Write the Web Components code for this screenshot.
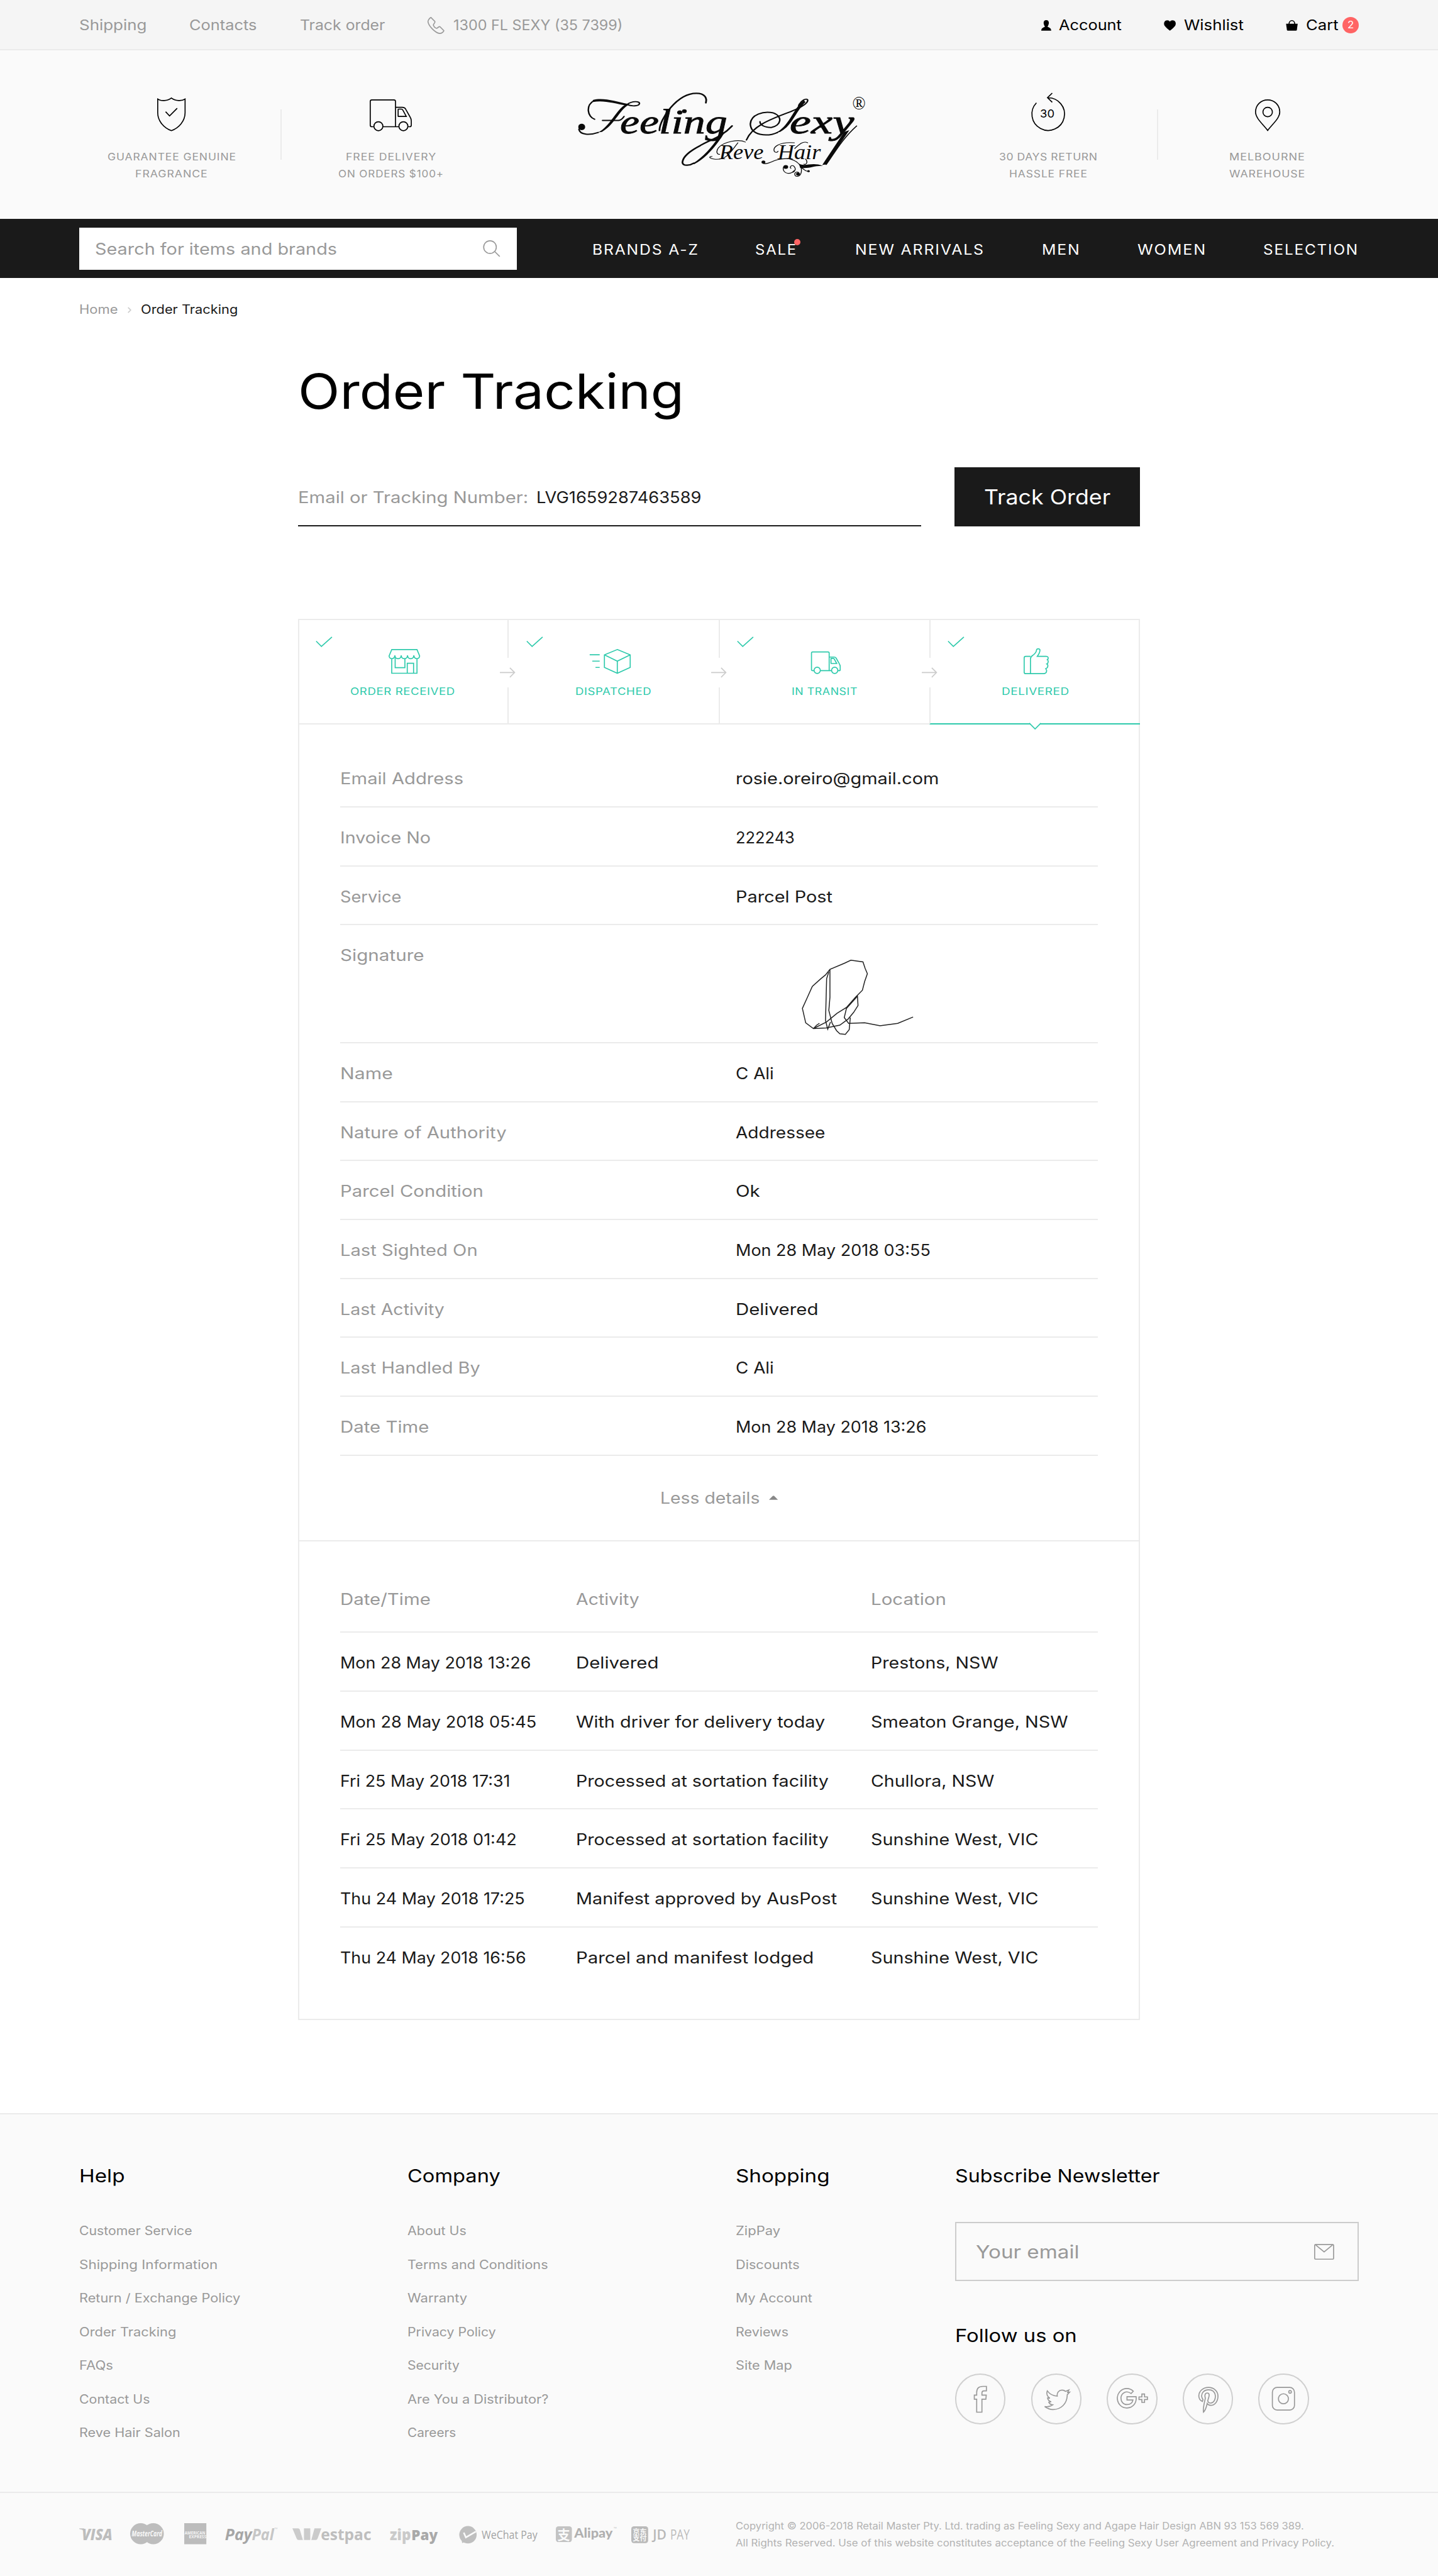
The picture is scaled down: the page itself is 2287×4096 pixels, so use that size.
<!DOCTYPE html>
<html lang="en">
<head>
<meta charset="utf-8">
<title>Order Tracking</title>
<style>
html{background:#fff}
body{margin:0;height:4096px;font-family:Inter,"Open Sans",sans-serif;font-weight:420;color:#1a1a1a;overflow:hidden;display:flex;flex-direction:column}
</style>
</head>
<body>
<top-bar></top-bar>
<brand-header></brand-header>
<main-nav></main-nav>
<crumb-trail></crumb-trail>
<tracking-page>
  <fit-text slot="title" w="722" fs="96" color="#000" wt="440">Order Tracking</fit-text>
  <status-card></status-card>
</tracking-page>
<site-footer></site-footer>
<pay-footer></pay-footer>
<script>
/* Lengths are written in design units; S turns them into CSS pixels */
const S = .837;
const px = s => s.replace(/(-?[\d.]+)px/g, (_, v) => (v * S).toFixed(3) + 'px')
  .replace(/(<svg[^>]*?) width="([\d.]+)" height="([\d.]+)"/g, (_, a, w, h) => `${a} width="${(w * S).toFixed(3)}" height="${(h * S).toFixed(3)}"`);
const define = (name, css, html, after) => customElements.define(name, class extends HTMLElement {
  connectedCallback() {
    if (this.shadowRoot) return;
    const root = this.attachShadow({ mode: 'open' });
    root.innerHTML = px(`<style>*{box-sizing:border-box}:host{display:block;box-sizing:border-box;flex:none}${css}</style>` +
      (typeof html === 'function' ? html(this) : html));
    if (after) after(this, root);
  }
});

/* Text set to a given ink width: w = width, fs = size, ls = tracking, wt = weight */
const ctx = document.createElement('canvas').getContext('2d');
const T = (t, w, fs, color = '#1a1a1a', ls = 0, wt = 420) =>
  `<fit-text w="${w}" fs="${fs}" color="${color}" ls="${ls}" wt="${wt}">${t}</fit-text>`;
define('fit-text', `:host{display:inline-block;flex:none;white-space:nowrap;text-align:left}
  span{display:inline-block;transform-origin:0 50%}`, '<span><slot></slot></span>', (el, root) => {
  const a = n => el.getAttribute(n);
  const size = a('fs') * .965 * S, ls = (a('ls') || 0) * S, wt = a('wt') || 420;
  ctx.font = `${wt} ${size}px Inter, "Open Sans", sans-serif`;
  const text = el.textContent, m = ctx.measureText(text), n = [...text].length;
  const ink = m.actualBoundingBoxRight + m.actualBoundingBoxLeft + ls * (n - 1);
  const k = (a('w') - (a('w') > 40 ? 1.2 : 0)) * S / ink;
  el.style.cssText = `font-size:${size}px;font-weight:${wt};letter-spacing:${ls}px;color:${a('color')};width:${((m.width + ls * n) * k).toFixed(2)}px`;
  root.querySelector('span').style.transform = `scaleX(${k.toFixed(4)})`;
});

const TRUCK = '<path d="M8 52H4Q1 52 1 49V4Q1 1 4 1H46Q49 1 49 4V52M25 52H55M49 15H62Q66 15 68 18L77 34Q79 37 79 41V49Q79 52 76 52H73M55 18.500H60Q62 18.500 63 20.500L69.500 32.500H54.500Q54 32.500 54 32V19Z"/><circle cx="16.500" cy="51" r="8.500"/><circle cx="64" cy="51" r="8.500"/>';
const ICONS = {
  phone: [32, 32, '<path d="M6.500 1L14 8.500C15 11 11 13 11 15.500C12 18 15 21 17 21.500C19.500 21.500 21 17.500 23.500 18.500L31 26C31 28 26 32 22.500 31.200C14 29.500 2 17 .8 9C.8 5.500 4 2 6.500 1Z"/>'],
  person: [19, 20, '<path fill="currentColor" stroke="none" d="M9.500 0C13 0 14.500 2.500 14.500 5.500C14.500 8.500 12.500 11.500 12 12.500C14 14 19 14.500 19 20H0C0 14.500 5 14 7 12.500C6.500 11.500 4.500 8.500 4.500 5.500C4.500 2.500 6 0 9.500 0Z"/>'],
  heart: [23, 20, '<path fill="currentColor" stroke="none" d="M11.500 3C13 0 17 -.5 20 1.200C23 3.500 23.600 8 21 11.500C18.500 15 14.500 18 11.500 20C8.500 18 4.500 15 2 11.500C-.6 8 0 3.500 3 1.200C6 -.5 10 0 11.500 3Z"/>'],
  bag: [23, 20, '<path fill="currentColor" stroke="none" d="M.5 7H22.500L21 18.500Q20.800 20 19 20H4Q2.200 20 2 18.500Z"/><path d="M6 8C6 -1.500 17 -1.500 17 8"/>'],
  shield: [54, 64, '<path d="M1 3C7 7 19 7 27 1C35 7 47 7 53 3V29C53 45 41 58 27 63C13 58 1 45 1 29Z"/><path d="M16 27L23.500 35L38 20.500"/>'],
  truck: [80, 60, TRUCK],
  'return': [64, 72, '<path d="M31 9A31 31 0 1 1 10 18.500M40 0L31 8.700L40 17.500"/>'],
  pin: [48, 60, '<path d="M24 1C37 1 47 11 47 24C47 36 33 47 24 59C15 47 1 36 1 24C1 11 11 1 24 1Z"/><circle cx="24" cy="24" r="9"/>'],
  search: [33, 32, '<circle cx="13.500" cy="13" r="12"/><path d="M22.500 21.500L32 31"/>'],
  check: [32, 21, '<path d="M1 9L11 19L31 1"/>'],
  arrow: [30, 20, '<path d="M0 10H28M19 1L28 10L19 19"/>'],
  store: [60, 47, '<path d="M6 1H54L59 13C59 20 49 20.500 48 12C47.500 20.500 36.500 20.500 36 12C35.500 20.500 24.500 20.500 24 12C23.500 20.500 12.500 20.500 12 12C11 20.500 1 20 1 13ZM6 18V46H54V18M12.500 17V35.500H31V18M35.500 46V27H47.500V46"/>'],
  parcel: [79, 47, '<path d="M1 11H20M6 23H20M12 35H20M53.500 1L78 11V35L53.500 46L29 35V11ZM29 11L53.500 23L78 11M53.500 23V46"/>'],
  transit: [56, 42, `<g transform="scale(.7)" stroke-width="2.850">${TRUCK}</g>`],
  thumb: [49, 49, '<path d="M13 15H4Q1 15 1 18V45Q1 48 4 48H38C44 48 45 42 42 38.500C47 37 47 31 44 29.500C48 27.500 47 22.500 45 21.500C48 19 47 15 43 15H26C29 11 31 8 31 3C30.500 0 25 0 24.500 3C24 9 20 11 17 13.500C14 15.500 13 17 13 20V48"/>'],
  mail: [38, 30, '<rect x="1" y="1" width="36" height="28" rx="2"/><path d="M3 2L19 15L35 2"/>'],
  facebook: [96, 96, '<path d="M59.500 24.500V33H55C52 33 51 34.500 51 37V41H59.200L58.500 48.800H51V73.500H41V48.800H36.500V41H41V36C41 28 45 24.500 52.600 24.500Z"/>'],
  twitter: [96, 96, '<path d="M30.700 33C35 39 42 42.500 49.500 43C48.500 36 53 31.500 58.700 31.500C61 31.500 63.500 32.500 65 34C67.500 33.500 69.500 32.500 71.500 31.500L69.300 36L73 35.500L68.500 40.500C68.500 57 57 68.500 41.700 68.500C36 68.500 30 66 25.700 62.700C31 63.500 37 62.500 41 59.500C37.500 59 34.500 57.500 33.500 54.500L38 53.800C34 52.500 31.500 49.500 31.200 46.500L35.500 47C30.500 43.500 28.500 38.500 30.700 33Z"/>'],
  google: [96, 96, '<path d="M50.600 33.700L46.500 38C37 31 27.200 37.500 27.200 47C27.200 54 32 59 38.500 59C45 59 49 55.500 50 50.300H38.700V44H56C57.500 56 50 65.500 38.500 65.500C28 65.500 20.300 57 20.300 47C20.300 37 28 28.500 38.500 28.500C43 28.500 47.500 30.500 50.600 33.700ZM67 39H72V44.500H77.500V49.500H72V55H67V49.500H61.500V44.500H67Z"/>'],
  pinterest: [96, 96, '<path d="M37.500 53C32.500 51 30.600 46.500 30.600 42C31 33 39 26.500 49 26.500C59 26.500 67 33.500 67 43C67 53 61 60.500 53 60.500C50 60.500 47.500 59 46.500 57C45 63 44 69 39.500 73.500C38 67 40.500 58 43 47C41.500 42 42 37 46.700 37C51 37 50.500 42 49.500 45L47.500 52C48.500 55.500 51 56.500 54 56C60 55 62.500 48 62 42C61 35 56 31 49 31C41 31 35.500 36.500 36 43C36 46 37 47.500 38.500 49.500Z"/>'],
  instagram: [96, 96, '<rect x="27" y="26.500" width="42" height="43" rx="9"/><circle cx="48" cy="48" r="9.500"/><circle cx="60.600" cy="35" r="2.500"/>']
};
define('ui-icon', ':host{display:inline-block;flex:none;line-height:0}svg{display:block;overflow:visible}', el => {
  const [w, h, body] = ICONS[el.getAttribute('name')];
  return `<svg width="${w}" height="${h}" viewBox="0 0 ${w} ${h}" fill="none" stroke="currentColor" stroke-width="2">${body}</svg>`;
});
const I = n => `<ui-icon name="${n}"></ui-icon>`;
const GREY = '#999';

define('top-bar', `:host{height:96px;background:#f5f5f5;border-bottom:2.4px solid #ebebeb;padding:2px 150px 0;display:flex;align-items:center;justify-content:space-between;line-height:40px}
  div{display:flex;align-items:center;color:#999}.l{gap:81.5px}.r{color:#000;gap:80.5px}.r div{color:#000;gap:15px}.ph{gap:16px}
  b{width:32px;height:32px;border-radius:50%;background:#ff6464;display:flex;align-items:center;justify-content:center;margin-left:-8px}`,
  `<div class="l">${T('Shipping', 127, 28, GREY)}${T('Contacts', 127, 28, GREY)}${T('Track order', 161, 28, GREY)}
   <div class="ph">${I('phone')}${T('1300 FL SEXY (35 7399)', 319, 28, GREY)}</div></div>
   <div class="r"><div>${I('person')}${T('Account', 120, 28, '#000')}</div><div>${I('heart')}${T('Wishlist', 114, 28, '#000')}</div>
   <div>${I('bag')}${T('Cart', 61, 28, '#000')}<b>${T('2', 10, 20, '#fff')}</b></div></div>`);

define('feature-item', `:host{width:416.500px;display:flex;flex-direction:column;align-items:center;color:#000}
  .i{height:153px;display:flex;align-items:flex-end;margin-bottom:33px;position:relative}
  .n{position:absolute;left:-4px;right:0;top:141px;margin-top:-36px;text-align:center;line-height:30px}
  ::slotted(fit-text){line-height:32px;display:block}`.replaceAll('32px', '26.784px').replaceAll('26.784px', '32px'),
  el => `<div class="i">${I(el.getAttribute('icon'))}${el.hasAttribute('label') ? `<div class="n">${T(el.getAttribute('label'), 26, 22, '#000', 0, 400)}</div>` : ''}</div><slot></slot>`);

define('brand-logo', ':host{width:640px;height:210px}svg{display:block;overflow:visible}text{font-family:"Liberation Serif",serif;font-style:italic}',
  `<svg width="640" height="210" viewBox="0 0 1568 630" preserveAspectRatio="none" fill="none" stroke="#0a0a0a" stroke-linecap="round">
  <g fill="#0a0a0a" stroke="none">
   <text x="316" y="310" font-size="196" textLength="500" lengthAdjust="spacingAndGlyphs" stroke="#0a0a0a" stroke-width="3">eeling</text>
   <text x="1106" y="310" font-size="196" textLength="300" lengthAdjust="spacingAndGlyphs" stroke="#0a0a0a" stroke-width="3">exy</text>
   <text x="778" y="456" font-size="118" textLength="207" lengthAdjust="spacingAndGlyphs">Reve</text>
   <text x="1050" y="456" font-size="118" textLength="201" lengthAdjust="spacingAndGlyphs">Hair</text>
   <text x="1398" y="172" font-size="106" textLength="62" lengthAdjust="spacingAndGlyphs" style="font-style:normal">®</text>
   <ellipse cx="138" cy="272" rx="16" ry="18"/><ellipse cx="616" cy="182" rx="11" ry="11"/>
   <path d="M190 118C240 102 300 128 350 140L345 150C290 138 240 118 190 130Z"/>
   <path d="M345 142C300 170 270 270 215 303L232 300C290 262 310 180 360 142Z"/>
   <path d="M1150 482C1180 500 1210 470 1262 494C1215 492 1200 512 1155 505Z"/>
   <path d="M1172 120C1120 170 1105 270 1040 306L1062 300C1120 262 1130 190 1180 130Z"/>
   <path d="M1360 300L1258 488L1276 486L1384 290Z"/>
   <path d="M785 305C760 370 700 450 650 484L662 484C720 448 770 370 805 300Z"/>
   <circle cx="1088" cy="500" r="11"/><circle cx="984" cy="472" r="9"/><circle cx="1145" cy="540" r="9"/><circle cx="1194" cy="524" r="6"/>
  </g>
  <path stroke-width="7" d="M198 228C165 215 155 150 195 122M350 145C370 155 405 155 407 138C408 125 375 122 350 143M125 285C130 318 175 320 215 303M235 235H310Q325 232 335 212"/>
  <path stroke-width="8" d="M500 292C500 230 580 80 672 80C712 80 722 108 716 134"/>
  <path stroke-width="8" d="M838 266C790 330 735 345 690 378C640 410 608 440 607 475C610 498 645 490 660 478"/>
  <path stroke-width="7" d="M905 346C930 270 1010 230 1110 185C1160 160 1192 135 1190 118C1185 105 1160 120 1148 150M1050 303C1000 330 925 320 923 255C925 200 985 180 1030 192C1075 210 1068 265 1020 275C985 275 968 258 968 242"/>
  <path stroke-width="5" d="M1418 266C1350 340 1310 430 1276 486"/>
  <path stroke-width="4" d="M900 358C870 340 800 355 775 390C760 415 770 430 780 428M865 362C830 420 810 460 760 456C735 452 725 442 745 440M1190 362C1170 350 1150 370 1130 395M1128 362C1060 355 1025 385 1035 412C1045 422 1050 414 1052 410M984 480C1010 490 1030 450 1100 452C1150 465 1165 500 1160 530C1155 560 1128 560 1130 538C1134 525 1150 526 1150 540M1128 520C1110 545 1078 540 1076 510C1076 495 1085 488 1096 498M1112 508C1104 500 1116 485 1126 496C1138 510 1130 525 1122 530M1160 505C1175 510 1178 530 1196 524M1180 455C1192 470 1185 490 1172 484"/>
  </svg>`);

define('brand-header', `:host{height:320px;background:#fafafa;padding:0 116px 0 118px;display:flex;align-items:flex-start}
  i{width:2.400px;height:96px;margin:112px -1.200px 0;background:#ebebeb;flex:none}.m{flex:1;padding:54px 0 0 98px}`,
  `<feature-item icon="shield">${T('GUARANTEE GENUINE', 244, 20, GREY, 1, 400)}${T('FRAGRANCE', 136, 20, GREY, 1, 400)}</feature-item><i></i>
  <feature-item icon="truck">${T('FREE DELIVERY', 171, 20, GREY, 1, 400)}${T('ON ORDERS $100+', 200, 20, GREY, 1, 400)}</feature-item>
  <div class="m"><brand-logo></brand-logo></div>
  <feature-item icon="return" label="30">${T('30 DAYS RETURN', 186, 20, GREY, .6, 400)}${T('HASSLE FREE', 147, 20, GREY, 1, 400)}</feature-item><i></i>
  <feature-item icon="pin">${T('MELBOURNE', 142, 20, GREY, 1, 400)}${T('WAREHOUSE', 144, 20, GREY, 1, 400)}</feature-item>`);

define('main-nav', `:host{height:112px;background:#1a1a1a;padding:0 150px;display:flex;align-items:center;line-height:40px}
  .s{width:832px;height:80px;background:#fff;display:flex;align-items:center;justify-content:space-between;padding:2px 32px 0 31px;color:#999;margin-right:144px}
  nav{flex:1;display:flex;justify-content:space-between;align-items:center;padding-top:5px}.d{display:flex;position:relative;margin:0 2px 0 -2px}.d:after{content:"";position:absolute;width:12px;height:12px;border-radius:50%;background:#ff6464;right:-6px;top:0}`,
  `<div class="s">${T('Search for items and brands', 459, 32, GREY)}${I('search')}</div>
  <nav>${T('BRANDS A-Z', 199, 28, '#fff', 2)}<span class="d">${T('SALE', 77, 28, '#fff', 2)}</span>${T('NEW ARRIVALS', 243, 28, '#fff', 2)}${T('MEN', 70, 28, '#fff', 2)}${T('WOMEN', 129, 28, '#fff', 2)}${T('SELECTION', 178, 28, '#fff', 2)}</nav>`);

define('crumb-trail', `:host{padding:42px 150px 0;height:80px;display:flex;align-items:center;line-height:40px}svg{margin:0 17px 0 18px}`,
  `${T('Home', 73, 24, GREY)}<svg width="9" height="12" viewBox="0 0 9 12" fill="none" stroke="#ccc" stroke-width="2"><path d="M2 1L7 6L2 11"/></svg>${T('Order Tracking', 183, 24)}`);

define('tracking-page', `:host{width:1600px;margin:76px auto 176px}
  ::slotted([slot=title]){line-height:120px;display:block}
  .f{display:flex;justify-content:space-between;margin:84px 0 176px;height:112px}
  .i{width:1184px;border-bottom:2.400px solid #1a1a1a;display:flex;gap:16px;line-height:114px}
  .b{width:352px;background:#1a1a1a;line-height:114px;text-align:center}`,
  `<slot name="title"></slot><div class="f"><div class="i">${T('Email or Tracking Number:', 434, 32, GREY)}${T('LVG1659287463589', 311, 32)}</div><div class="b">${T('Track Order', 240, 40, '#fff')}</div></div><slot></slot>`);

define('step-item', `:host{flex:1;position:relative;height:200px;border-bottom:2.400px solid #ebebeb;display:flex;flex-direction:column;align-items:center;color:#2fcaac}
  :host(:not([first])){border-left:2.400px solid #ebebeb}:host([last]){border-bottom-color:#2fcaac}
  .c{position:absolute;left:33px;top:31px}.a{position:absolute;right:-18px;top:71px;height:56px;width:32px;background:#fff;color:#ccc;display:flex;align-items:center;z-index:1}
  .n{position:absolute;left:50%;margin-left:-11px;bottom:-13px}
  .i{height:102px;display:flex;align-items:flex-end;margin-bottom:14px}::slotted(fit-text){line-height:40px}
  :host([icon=store]) .i{padding-left:7px}:host([icon=parcel]) .i{padding-right:13px}:host([icon=transit]) .i,:host([icon=thumb]) .i{padding-left:5px}`,
  el => `<div class="c">${I('check')}</div><div class="i">${I(el.getAttribute('icon'))}</div><slot></slot>` +
    (el.hasAttribute('last') ? '<svg class="n" width="22" height="14" viewBox="0 0 22 14"><path d="M0 0H22L11 12Z" fill="#fff"/><path d="M0 1L11 12L22 1" fill="none" stroke="#2fcaac" stroke-width="2"/></svg>' : `<div class="a">${I('arrow')}</div>`));

define('detail-row', `:host{height:112px;border-bottom:2.400px solid #ebebeb;display:flex;line-height:115px}
  :host([tall]){height:224px}div{width:752px}`, '<div><slot name="k"></slot></div><slot></slot>');
define('signature-mark', ':host{margin:63px 0 0 119px;line-height:0}',
  `<svg width="225" height="148" viewBox="915 1205 215 270" preserveAspectRatio="none" fill="none" stroke="#222"><g stroke-width="1.500">
  <path vector-effect="non-scaling-stroke" d="M942 1448L966 1425L985 1395L1002 1375L1018 1340L1031 1315L1035 1285L1040 1258L1036 1240L1032 1217L1010 1211L998 1222L972 1243L964 1262L955 1276L940 1302L931 1340L922 1378L928 1428L942 1448L965 1446L990 1436L1005 1415L1015 1392L1023 1368L1022 1336L1002 1378L998 1410L1006 1430L1035 1428L1063 1438L1095 1430L1123 1408"/>
  <path vector-effect="non-scaling-stroke" d="M972 1243L972 1340L970 1385L976 1430L984 1455L990 1466L1000 1468L1007 1452L1009 1410M970 1252L966 1275L964 1420L968 1450L973 1425M942 1448L948 1436L953 1430"/></g></svg>`);

const ROWS = [['Email Address', 232, 'rosie.oreiro@gmail.com', 384], ['Invoice No', 170, '222243', 111], ['Service', 115, 'Parcel Post', 182],
  ['Signature', 158, null], ['Name', 97, 'C Ali', 71], ['Nature of Authority', 314, 'Addressee', 170], ['Parcel Condition', 269, 'Ok', 46],
  ['Last Sighted On', 258, 'Mon 28 May 2018 03:55', 368], ['Last Activity', 196, 'Delivered', 153], ['Last Handled By', 264, 'C Ali', 71], ['Date Time', 166, 'Mon 28 May 2018 13:26', 360]];
const LOG = [['Mon 28 May 2018 13:26', 360, 'Delivered', 153, 'Prestons, NSW', 240], ['Mon 28 May 2018 05:45', 371, 'With driver for delivery today', 474, 'Smeaton Grange, NSW', 374],
  ['Fri 25 May 2018 17:31', 320, 'Processed at sortation facility', 478, 'Chullora, NSW', 234], ['Fri 25 May 2018 01:42', 332, 'Processed at sortation facility', 478, 'Sunshine West, VIC', 317],
  ['Thu 24 May 2018 17:25', 350, 'Manifest approved by AusPost', 494, 'Sunshine West, VIC', 317], ['Thu 24 May 2018 16:56', 352, 'Parcel and manifest lodged', 448, 'Sunshine West, VIC', 317]];

define('log-row', `:host{height:112px;display:grid;grid-template-columns:448px 561px 1fr;line-height:115px}
  :host(:not([last])){border-bottom:2.400px solid #ebebeb}:host([head]){height:174px;line-height:221px}`, '<slot></slot>');

define('status-card', `:host{height:2662px;position:relative;border:2.400px solid #ebebeb}
  .s{display:flex;margin:-2.400px -2.400px 0;border-top:2.400px solid #ebebeb;height:200px}.s step-item{height:197.600px}
  .d{padding:46px 77.600px 0}.m{height:162px;margin-top:0;border-bottom:2.400px solid #ebebeb;display:flex;justify-content:center;align-items:center;gap:17px;line-height:50px}
  .t{padding:0 77.600px}`,
  `<div class="s"><step-item icon="store" first>${T('ORDER RECEIVED', 199, 20, '#2fcaac', .6)}</step-item><step-item icon="parcel">${T('DISPATCHED', 143, 20, '#2fcaac', .6)}</step-item>
  <step-item icon="transit">${T('IN TRANSIT', 124, 20, '#2fcaac', .6)}</step-item><step-item icon="thumb" last>${T('DELIVERED', 127, 20, '#2fcaac', .6)}</step-item></div>
  <div class="d">${ROWS.map(([k, kw, v, vw]) => `<detail-row${v ? '' : ' tall'}><span slot="k">${T(k, kw, 32, GREY)}</span>${v ? T(v, vw, 32) : '<signature-mark></signature-mark>'}</detail-row>`).join('')}</div>
  <div class="m">${T('Less details', 187, 32, GREY)}<svg width="17" height="8" viewBox="0 0 17 8"><path d="M0 8L7 .8Q8.500 -.4 10 .8L17 8Z" fill="#888"/></svg></div>
  <div class="t"><log-row head>${T('Date/Time', 169, 32, GREY)}${T('Activity', 121, 32, GREY)}${T('Location', 140, 32, GREY)}</log-row>
  ${LOG.map((r, i) => `<log-row${i == 5 ? ' last' : ''}>${T(r[0], r[1], 32)}${T(r[2], r[3], 32)}${T(r[4], r[5], 32)}</log-row>`).join('')}</div>`);

define('link-column', `h3{margin:0 0 48.5px;font:inherit;line-height:48px;height:48px}::slotted(fit-text){display:block;line-height:64px}`, '<h3><slot name="h"></slot></h3><slot></slot>');
const H = (t, w) => T(t, w, 36, '#000');
const col = (h, hw, links) => `<link-column><span slot="h">${H(h, hw)}</span>${links.map(([t, w]) => T(t, w + 1, 24, GREY)).join('')}</link-column>`;
define('social-link', ':host{width:96px;height:96px;border-radius:50%;border:2.400px solid #d0d0d0;color:#999}ui-icon{margin:-2.400px}', el => I(el.getAttribute('name')));

define('site-footer', `:host{height:722px;background:#fafafa;border-top:2.400px solid #ebebeb;border-bottom:2.400px solid #ebebeb;padding:94px 150px 0;display:grid;grid-template-columns:624px 624px 417px 767px}
  .h{line-height:48px;height:48px}.e{height:112px;margin:63px 0 80px;border:2.400px solid #ccc;display:flex;align-items:center;justify-content:space-between;padding:0 45px 0 37px;color:#999;line-height:54px}
  .e fit-text{padding-top:2px}.s{display:flex;gap:48px;margin-top:48px}`,
  col('Help', 84, [['Customer Service', 213], ['Shipping Information', 260], ['Return / Exchange Policy', 305], ['Order Tracking', 182], ['FAQs', 63], ['Contact Us', 133], ['Reve Hair Salon', 189]]) +
  col('Company', 176, [['About Us', 112], ['Terms and Conditions', 267], ['Warranty', 114], ['Privacy Policy', 167], ['Security', 98], ['Are You a Distributor?', 267], ['Careers', 91]]) +
  col('Shopping', 176, [['ZipPay', 84], ['Discounts', 120], ['My Account', 144], ['Reviews', 99], ['Site Map', 105]]) +
  `<div><div class="h">${H('Subscribe Newsletter', 389)}</div><div class="e">${T('Your email', 195, 36, GREY)}${I('mail')}</div>
  <div class="h">${H('Follow us on', 227)}</div><div class="s">${['facebook', 'twitter', 'google', 'pinterest', 'instagram'].map(n => `<social-link name="${n}"></social-link>`).join('')}</div></div>`);

/* Payment marks: [left margin, width, svg body], all 40 high */
const tx = (t, x, y, s, w, c, f = 'Open Sans', o = '') => `<text x="${x}" y="${y}" font-size="${s}" textLength="${w}" lengthAdjust="spacingAndGlyphs" fill="${c}" font-family="${f}" ${o}>${t}</text>`;
const B = 'font-weight="700"', BI = 'font-weight="700" font-style="italic"';
const PAY = [
  [0, 64, '<path d="M0 10H9L13 22L9 15Q6 12 0 11Z" fill="#c4c4c4"/>' + tx('VISA', 5, 32, 30, 58, '#bdbdbd', 'Open Sans', 'font-weight="800" font-style="italic"')],
  [33, 64, '<circle cx="20" cy="20" r="20" fill="#bdbdbd"/><circle cx="44" cy="20" r="20" fill="#bdbdbd"/>' + tx('MasterCard', 3, 25, 15, 58, '#f8f8f8', 'Open Sans', BI)],
  [33, 48, '<rect x="6" width="42" height="40" fill="#bcbcbc"/>' + tx('AMERICAN', 7, 21, 9, 39, '#f5f5f5', 'Open Sans', B) + tx('EXPRESS', 15, 29, 9, 33, '#f5f5f5', 'Open Sans', B)],
  [34, 102, tx('Pay', 1, 32, 30, 51, '#a6a6a6', 'Open Sans', BI) + tx('Pal', 52, 32, 30, 42, '#c6c6c6', 'Open Sans', BI) + tx('™', 95, 14, 8, 6, '#d0d0d0')],
  [28, 150, '<path d="M0 10H11Q13 10 14 12L20 32H12Q9 32 8 29ZM22 10H34V32H22ZM42 10H55L48 29Q47 32 44 32H36Z" fill="#cbcbcb"/>' + tx('estpac', 54, 32, 29, 96, '#bebebe', 'Open Sans', B)],
  [35, 92, tx('zip', 0, 32, 29, 40, '#cacaca', 'Open Sans', 'font-weight="800"') + tx('Pay', 41, 32, 27, 50, '#a9a9a9', 'Open Sans', 'font-weight="800"')],
  [39, 150, '<circle cx="17" cy="22" r="16.500" fill="#bfbfbf"/><path d="M5 31L6 38L14 34Z" fill="#bfbfbf"/><path d="M9 18L13 27L32 16" stroke="#fafafa" stroke-width="3" fill="none"/>' + tx('WeChat Pay', 43, 30, 21, 106, '#a3a3a3')],
  [34, 116, '<rect y="6" width="30.500" height="30" rx="5" fill="#c3c3c3"/>' + tx('支', 3, 31, 25, 24, '#fafafa', 'Noto Sans CJK SC', B) + tx('Alipay', 35, 28, 25, 73, '#b0b0b0', 'Lato', 'font-weight="900"') + tx('™', 110, 13, 8, 6, '#ccc')],
  [28, 112, '<rect y="6" width="32" height="32" rx="5" fill="#bababa"/>' + tx('京东', 3, 21, 13, 26, '#fafafa', 'Noto Sans CJK SC', B) + tx('支付', 3, 34, 13, 26, '#fafafa', 'Noto Sans CJK SC', B) + tx('JD', 41, 31, 25, 26, '#b8b8b8', 'Open Sans', 'font-weight="600"') + tx('PAY', 74, 31, 25, 37, '#bcbcbc')]
];
define('pay-footer', `:host{flex:1;background:#fafafa;padding:0 150px;display:flex}
  .p{width:1248px;display:flex;padding-top:58px}svg{display:block;flex:none;overflow:visible}.c{padding-top:47px;line-height:32px}.c fit-text{display:block}`,
  `<div class="p">${PAY.map(([m, w, b]) => `<svg style="margin-left:${m}px" width="${w}" height="40" viewBox="0 0 ${w} 40">${b}</svg>`).join('')}</div>
  <div class="c">${T('Copyright © 2006-2018 Retail Master Pty. Ltd. trading as Feeling Sexy and Agape Hair Design ABN 93 153 569 389.', 1080, 20, '#b3b3b3', 0, 400)}
  ${T('All Rights Reserved. Use of this website constitutes acceptance of the Feeling Sexy User Agreement and Privacy Policy.', 1138, 20, '#b3b3b3', 0, 400)}</div>`);
</script>
</body>
</html>
